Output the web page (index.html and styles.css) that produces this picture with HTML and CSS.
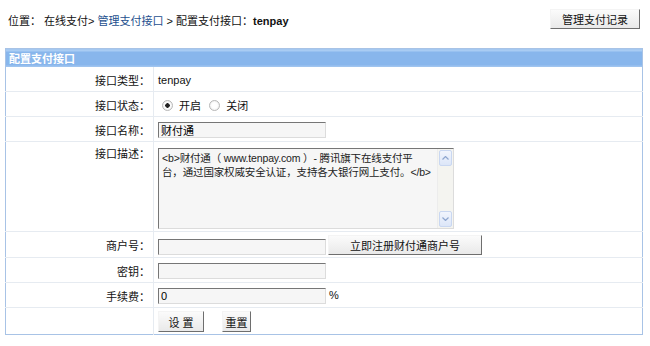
FILE: index.html
```html
<!DOCTYPE html>
<html lang="zh-CN">
<head>
    <meta charset="UTF-8">
    <title>配置支付接口</title>
    <link rel="stylesheet" href="styles.css">
</head>
<body>
    <div class="topbar">
        <div class="crumb">位置： 在线支付&gt; <a href="#">管理支付接口</a> &gt; 配置支付接口：<b>tenpay</b></div>
        <button class="btn btn-log">管理支付记录</button>
    </div>

    <table class="form-table">
        <tr><th colspan="2">配置支付接口</th></tr>
        <tr>
            <td class="label">接口类型：</td>
            <td>tenpay</td>
        </tr>
        <tr>
            <td class="label">接口状态：</td>
            <td>
                <label class="radio"><input type="radio" name="status" checked> 开启</label>
                <label class="radio"><input type="radio" name="status"> 关闭</label>
            </td>
        </tr>
        <tr>
            <td class="label">接口名称：</td>
            <td><input type="text" class="txt" value="财付通"></td>
        </tr>
        <tr class="tall">
            <td class="label">接口描述：</td>
            <td>
                <div class="desc-box">
                    <textarea class="desc">&lt;b&gt;财付通（ www.tenpay.com ）- 腾讯旗下在线支付平
台，通过国家权威安全认证，支持各大银行网上支付。&lt;/b&gt;</textarea>
                    <div class="scroll">
                        <span class="arrow"><svg width="7" height="4" viewBox="0 0 7 4"><path d="M0.5 3.5 L3.5 0.5 L6.5 3.5" fill="none" stroke="#8ea6cf" stroke-width="1.2"/></svg></span>
                        <span class="arrow"><svg width="7" height="4" viewBox="0 0 7 4"><path d="M0.5 0.5 L3.5 3.5 L6.5 0.5" fill="none" stroke="#8ea6cf" stroke-width="1.2"/></svg></span>
                    </div>
                </div>
            </td>
        </tr>
        <tr>
            <td class="label">商户号：</td>
            <td><input type="text" class="txt"> <button class="btn btn-reg">立即注册财付通商户号</button></td>
        </tr>
        <tr>
            <td class="label">密钥：</td>
            <td><input type="text" class="txt"></td>
        </tr>
        <tr>
            <td class="label">手续费：</td>
            <td><input type="text" class="txt" value="0"> %</td>
        </tr>
        <tr class="last">
            <td class="label"></td>
            <td><button class="btn btn-set">设 置</button><button class="btn btn-reset">重置</button></td>
        </tr>
    </table>
</body>
</html>
```

FILE: styles.css
```css
body {
    margin: 0;
    padding: 0 7px 0 5px;
    font-family: "Liberation Sans", Arial, "Noto Sans CJK SC", sans-serif;
    font-size: 11px;
    color: #111;
    background: #fff;
}
.topbar {
    display: flex;
    justify-content: space-between;
    align-items: center;
    height: 40px;
    padding: 0 3px 0 3px;
}
.crumb a {
    color: #1d4f8e;
    text-decoration: none;
}
.crumb b {
    font-weight: bold;
    color: #111;
}
.btn {
    font-family: inherit;
    font-size: 11px;
    color: #111;
    background: linear-gradient(#fbfbfb, #e9e9e9);
    border: 1px solid;
    border-color: #f4f4f4 #6e6e6e #6e6e6e #f4f4f4;
    padding: 0;
    height: 20px;
    cursor: pointer;
}
.btn-log {
    width: 90px;
    margin-top: -2px;
}
.form-table {
    width: 100%;
    margin-top: 8px;
    border-collapse: collapse;
    border: 1px solid #a8c3e6;
}
.form-table th {
    height: 18px;
    padding: 0 3px;
    text-align: left;
    color: #fff;
    font-weight: bold;
    background: linear-gradient(#a9ccf3 0, #a9ccf3 2px, #88b6ec 2px, #88b6ec 16px, #9fc4ef 16px);
}
.form-table td {
    height: 19px;
    padding: 3px 4px 2px;
    border-bottom: 1px solid #e6ebf1;
    vertical-align: middle;
}
.form-table td.label {
    width: 140px;
    text-align: right;
    border-right: 1px solid #e6ebf1;
    padding-right: 3px;
}
.form-table tr.tall td {
    height: 82px;
    vertical-align: top;
}
.form-table tr.last td {
    border-bottom: none;
}
.radio {
    margin-right: 1px;
}
.radio input {
    appearance: none;
    -webkit-appearance: none;
    box-sizing: border-box;
    margin: 0 3px 0 4px;
    width: 11px;
    height: 11px;
    border: 1px solid #b8b8b8;
    border-radius: 50%;
    background: radial-gradient(#fff 40%, #e4e4e4);
    vertical-align: -1px;
}
.radio input:checked {
    background: radial-gradient(#222 0, #222 2px, #fff 2.5px, #e4e4e4);
}
.txt {
    width: 162px;
    height: 14px;
    padding: 0 2px;
    font-family: inherit;
    font-size: 11px;
    background: #f6f6f6;
    border: 1px solid;
    border-color: #767676 #dcdcdc #dcdcdc #767676;
    vertical-align: middle;
}
.desc-box {
    display: flex;
    box-sizing: border-box;
    width: 296px;
    height: 81px;
    margin-top: 3px;
    background: #f6f6f6;
    border: 1px solid;
    border-color: #767676 #dcdcdc #dcdcdc #767676;
}
.desc {
    flex: 1;
    min-width: 0;
    padding: 2px 0 2px 3px;
    font-family: inherit;
    font-size: 10.5px;
    letter-spacing: -0.15px;
    line-height: 14px;
    color: #222;
    background: transparent;
    border: none;
    outline: none;
    resize: none;
    white-space: pre;
    overflow: hidden;
}
.scroll {
    display: flex;
    flex-direction: column;
    justify-content: space-between;
    width: 15px;
    background: #f4f4f0;
    border-left: 1px solid #ececec;
}
.arrow {
    display: flex;
    align-items: center;
    justify-content: center;
    height: 14px;
    margin: 1px;
    background: linear-gradient(#f1f5fd, #dce6f8);
    border: 1px solid #c9d7f1;
    border-radius: 2px;
}
.btn-reg {
    width: 154px;
    margin-left: -1px;
}
.btn-set {
    width: 46px;
    height: 21px;
}
.btn-reset {
    width: 29px;
    height: 21px;
    margin-left: 18px;
}
```
